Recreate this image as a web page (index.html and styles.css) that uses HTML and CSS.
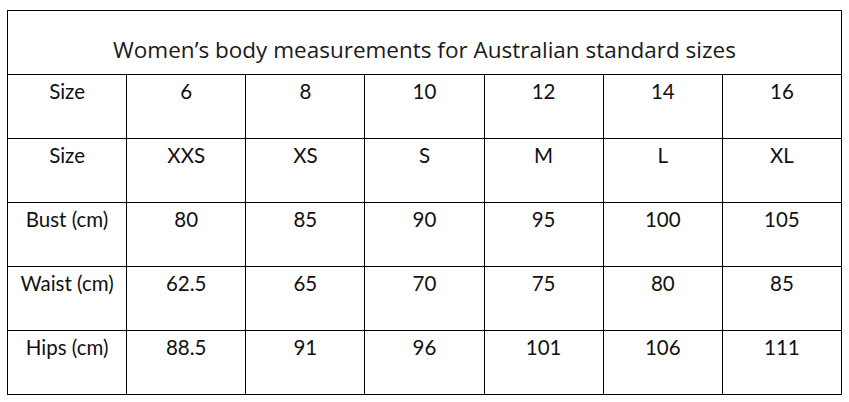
FILE: index.html
```html
<!DOCTYPE html>
<html>
<head>
<meta charset="utf-8">
<link rel="stylesheet" href="styles.css">
</head>
<body>
<table class="sizes">
  <tr><td class="title" colspan="7">Women’s body measurements for Australian standard sizes</td></tr>
  <tr><td>Size</td><td>6</td><td>8</td><td>10</td><td>12</td><td>14</td><td>16</td></tr>
  <tr><td>Size</td><td>XXS</td><td>XS</td><td>S</td><td>M</td><td>L</td><td>XL</td></tr>
  <tr><td>Bust (cm)</td><td>80</td><td>85</td><td>90</td><td>95</td><td>100</td><td>105</td></tr>
  <tr><td>Waist (cm)</td><td>62.5</td><td>65</td><td>70</td><td>75</td><td>80</td><td>85</td></tr>
  <tr><td>Hips (cm)</td><td>88.5</td><td>91</td><td>96</td><td>101</td><td>106</td><td>111</td></tr>
</table>
</body>
</html>
```
FILE: styles.css
```css
html, body { margin: 0; padding: 0; background: #fff; }
body { padding: 10px 0 0 7px; }
.sizes {
  border-collapse: collapse;
  width: 835px;
  table-layout: fixed;
  font-family: "Lato", "Open Sans", sans-serif;
  font-size: 20.5px;
  color: #111;
}
.sizes td {
  border: 1px solid #000;
  height: 64px;
  padding: 4px 0 0 0;
  text-align: center;
  vertical-align: top;
  line-height: 24px;
  box-sizing: border-box;
}
.sizes td.title {
  font-family: "Open Sans", sans-serif;
  font-size: 22.5px;
  padding-top: 27px;
  color: #1a1a1a;
}
```
